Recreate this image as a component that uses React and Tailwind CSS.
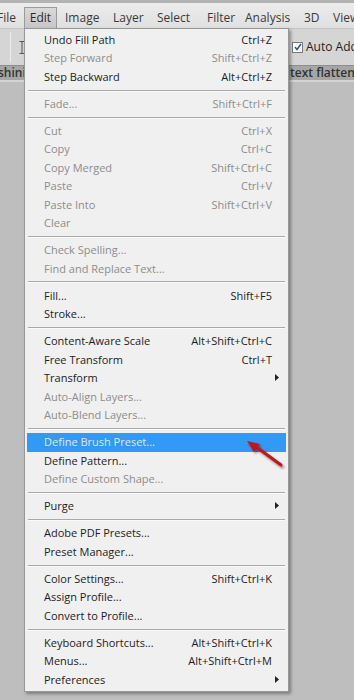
const font = { fontFamily: '"Open Sans", "Noto Sans", sans-serif' };

const topMenus = [
  { label: "Image", w: "w-[48px]" },
  { label: "Layer", w: "w-[44px]" },
  { label: "Select", w: "w-[50px]" },
  { label: "Filter", w: "w-[38px]" },
  { label: "Analysis", w: "w-[59px]" },
  { label: "3D", w: "w-[29px]" },
  { label: "View", w: "w-[40px]" },
];

// sep: separator line, off: greyed out, sub: has submenu arrow, hot: highlighted row
const items = [
  { label: "Undo Fill Path", key: "Ctrl+Z" },
  { label: "Step Forward", key: "Shift+Ctrl+Z", off: true },
  { label: "Step Backward", key: "Alt+Ctrl+Z" },
  { sep: true },
  { label: "Fade...", key: "Shift+Ctrl+F", off: true },
  { sep: true },
  { label: "Cut", key: "Ctrl+X", off: true },
  { label: "Copy", key: "Ctrl+C", off: true },
  { label: "Copy Merged", key: "Shift+Ctrl+C", off: true },
  { label: "Paste", key: "Ctrl+V", off: true },
  { label: "Paste Into", key: "Shift+Ctrl+V", off: true },
  { label: "Clear", off: true },
  { sep: true },
  { label: "Check Spelling...", off: true },
  { label: "Find and Replace Text...", off: true },
  { sep: true },
  { label: "Fill...", key: "Shift+F5" },
  { label: "Stroke..." },
  { sep: true },
  { label: "Content-Aware Scale", key: "Alt+Shift+Ctrl+C" },
  { label: "Free Transform", key: "Ctrl+T" },
  { label: "Transform", sub: true },
  { label: "Auto-Align Layers...", off: true },
  { label: "Auto-Blend Layers...", off: true },
  { sep: true },
  { label: "Define Brush Preset...", hot: true },
  { label: "Define Pattern..." },
  { label: "Define Custom Shape...", off: true },
  { sep: true },
  { label: "Purge", sub: true },
  { sep: true },
  { label: "Adobe PDF Presets..." },
  { label: "Preset Manager..." },
  { sep: true },
  { label: "Color Settings...", key: "Shift+Ctrl+K" },
  { label: "Assign Profile..." },
  { label: "Convert to Profile..." },
  { sep: true },
  { label: "Keyboard Shortcuts...", key: "Alt+Shift+Ctrl+K" },
  { label: "Menus...", key: "Alt+Shift+Ctrl+M" },
  { label: "Preferences", sub: true },
];

function SubArrow() {
  return (
    <svg width="4" height="7" viewBox="0 0 4 7" className="absolute right-[9px] top-[5px]">
      <path d="M0 0 L4 3.5 L0 7 Z" fill="#222" />
    </svg>
  );
}

function MenuRow({ item }) {
  if (item.sep) {
    return (
      <div className="h-[8.8px] flex items-center px-[3px]">
        <div className="w-full border-t border-[#a9a9a9] border-b border-b-[#fbfbfb]" />
      </div>
    );
  }

  const color = item.hot
    ? "text-[#dde9f7]"
    : item.off
      ? "text-[#8d8d8d]"
      : "text-[#1c1c1c]";

  const box = item.hot
    ? "bg-[#3399f7] mx-[2px] pl-[17px] pr-[14px]"
    : "pl-[19px] pr-[16px]";

  return (
    <div
      className={`relative h-[18.4px] flex items-center justify-between text-[11px] ${box} ${color}`}
    >
      <span>{item.label}</span>
      {item.key && <span>{item.key}</span>}
      {item.sub && <SubArrow />}
    </div>
  );
}

function App() {
  return (
    <div
      className="relative w-[354px] h-[700px] overflow-hidden bg-[#bebebe]"
      style={font}
    >
      {/* menu bar */}
      <div className="h-[3px] bg-[#b3b3b3]" />
      <div className="h-[25px] flex items-end overflow-hidden bg-gradient-to-b from-[#ececec] to-[#e0e0e0] text-[12px] text-[#3a3a3a] whitespace-nowrap">
        <div className="shrink-0 w-[24px] -ml-[3px] h-[21px] flex items-center">File</div>
        <div className="shrink-0 ml-[3px] w-[33px] h-[21px] flex items-center justify-center border border-b-0 border-[#9a9a9a] bg-gradient-to-b from-[#d9d9d9] to-[#c6c6c6] text-[#2a2a2a]">
          Edit
        </div>
        <div className="shrink-0 w-[8px]" />
        {topMenus.map((m) => (
          <div key={m.label} className={`${m.w} shrink-0 h-[21px] flex items-center`}>
            {m.label}
          </div>
        ))}
      </div>

      {/* options bar */}
      <div className="h-[37px] flex items-center overflow-hidden bg-[#d5d5d5] border-t border-[#c4c4c4]">
        <div className="shrink-0 ml-[10px] w-px h-[30px] bg-[#b0b0b0] border-r border-[#ececec]" />
        <svg width="6" height="13" viewBox="0 0 6 13" className="shrink-0 ml-[8px]">
          <path d="M0.5 0.5 H5.5 M3 0.5 V12.5 M0.5 12.5 H5.5" stroke="#555" strokeWidth="1" fill="none" />
        </svg>
        <div className="shrink-0 ml-[267px] flex items-center gap-[3px] text-[12px] text-[#1f1f1f] whitespace-nowrap">
          <div className="w-[11px] h-[11px] bg-white border border-[#7d7d7d] flex items-center justify-center">
            <svg width="8" height="8" viewBox="0 0 8 8">
              <path d="M1 4 L3 6.5 L7 1" stroke="#2a4f9a" strokeWidth="1.4" fill="none" />
            </svg>
          </div>
          <span>Auto Add/Delete</span>
        </div>
      </div>

      {/* document tabs */}
      <div className="h-[15px] flex items-center overflow-hidden bg-[#a6a6a6] border-t border-[#8e8e8e] text-[12px] font-semibold text-[#333] whitespace-nowrap">
        <span className="shrink-0 w-[292px] -ml-[2px]">shining</span>
        <span className="shrink-0">text flatten.psd</span>
      </div>
      <div className="h-[2px] bg-[#d4d4d4]" />

      {/* Edit menu */}
      <div className="absolute left-[24px] top-[28px] w-[265px] pt-[2px] pb-[2px] bg-[#f0f0f0] border border-[#979797] shadow-[2px_2px_3px_rgba(0,0,0,0.35)]">
        {items.map((item, i) => (
          <MenuRow key={i} item={item} />
        ))}
      </div>

      {/* red pointer arrow */}
      <svg
        width="354"
        height="700"
        viewBox="0 0 354 700"
        className="absolute inset-0 pointer-events-none"
      >
        <defs>
          <filter id="sh" x="-20%" y="-20%" width="140%" height="140%">
            <feDropShadow dx="1.5" dy="2" stdDeviation="1.2" floodColor="#000" floodOpacity="0.45" />
          </filter>
        </defs>
        <g filter="url(#sh)">
          <path d="M281 465 L255 446" stroke="#c3131a" strokeWidth="3" strokeLinecap="round" />
          <path d="M247 441 L260 444 L254 452 Z" fill="#c3131a" />
        </g>
      </svg>
    </div>
  );
}

export default App;
